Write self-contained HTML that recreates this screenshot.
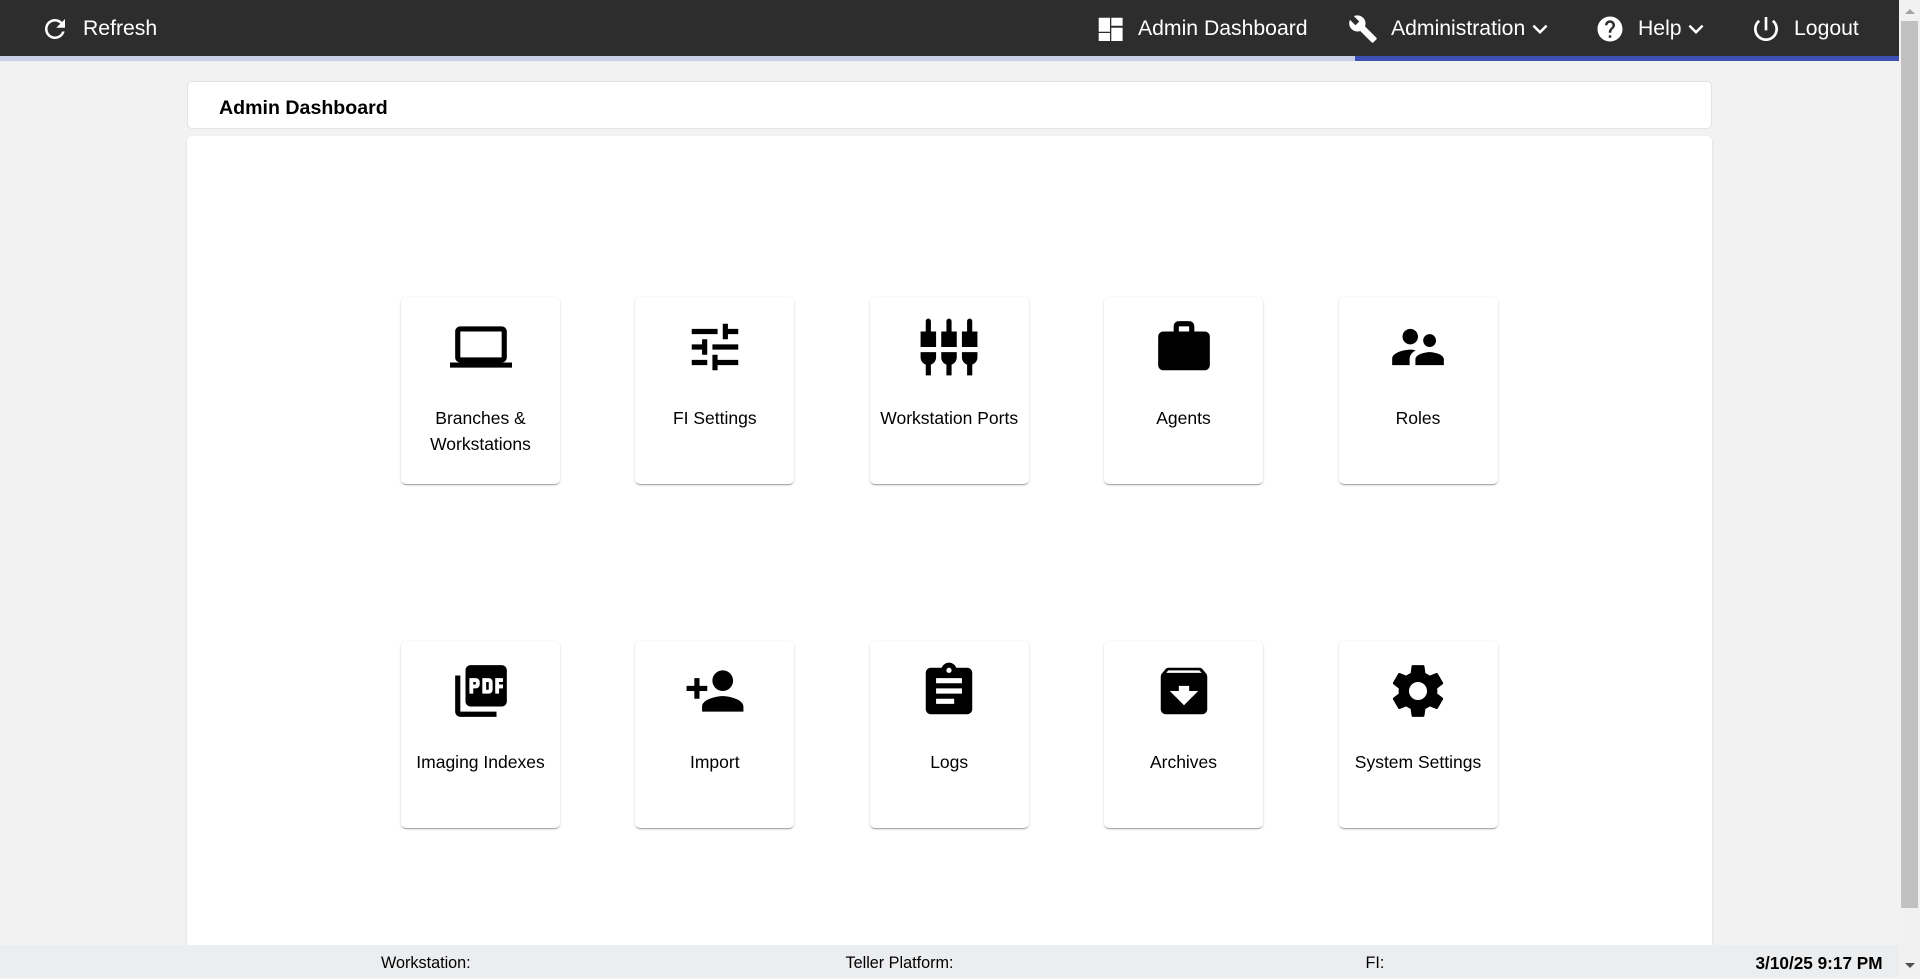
<!DOCTYPE html>
<html lang="en"><head><meta charset="utf-8"><title>Admin Dashboard</title>
<style>
*{box-sizing:border-box}
html,body{margin:0;padding:0;width:1920px;height:977px;overflow:hidden;background:#f2f2f3;font-family:"Liberation Sans",Arial,sans-serif;color:#000}
.abs,.nav,svg{position:absolute}
svg{display:block;fill:currentColor}
.top{position:absolute;left:0;top:0;width:1899px;height:56px;background:#2d2d2d}
.bar{position:absolute;left:0;top:56px;width:1354.5px;height:5px;background:#cbd0e9}
.bar2{position:absolute;left:1354.5px;top:56px;width:544.5px;height:5px;background:#3f51b5}
.nav{top:14.5px;font-size:21.2px;line-height:28px;color:#fff;white-space:nowrap}
.top svg{color:#fff}
.title{position:absolute;left:187px;top:81px;width:1525px;height:48px;background:#fff;border:1px solid #e3e3e3;border-radius:5px}
.title b{position:absolute;left:31px;top:11.5px;font-size:19.6px;line-height:28px;white-space:nowrap}
.main{position:absolute;left:187px;top:136px;width:1525px;height:830px;background:#fff;border-radius:5px;box-shadow:0 1px 2px rgba(0,0,0,.12)}
.card{position:absolute;width:159px;height:187px;background:#fff;border-radius:5px;box-shadow:0 2px 1px -1px rgba(0,0,0,.2),0 1px 1px 0 rgba(0,0,0,.14),0 1px 3px 0 rgba(0,0,0,.12)}
.card svg{left:48.5px;top:18.5px;width:62px;height:62px}
.card div{position:absolute;left:0;width:100%;top:108px;text-align:center;font-size:17.5px;line-height:26px}
.foot{position:absolute;left:0;top:945px;width:1899px;height:32px;background:#ecedef;font-size:16.2px;line-height:32px}
.foot span{position:absolute;top:1.5px;white-space:nowrap}
.foot b{position:absolute;left:1755.5px;top:2px;font-size:17.2px;white-space:nowrap}
.sb{position:absolute;left:1899px;top:0;width:21px;height:977px;background:#f1f1f1}
.th{position:absolute;left:2px;top:21px;width:17px;height:887px;background:#c1c1c1}
.up{position:absolute;left:6px;top:9px;width:0;height:0;border-left:5px solid transparent;border-right:5px solid transparent;border-bottom:5px solid #a3a3a3}
.dn{position:absolute;left:6px;top:963px;width:0;height:0;border-left:5px solid transparent;border-right:5px solid transparent;border-top:5px solid #505050}
</style></head><body>
<div class="top">
<svg style="left:40px;top:13.5px;width:30px;height:30px" viewBox="0 0 24 24"><path d="M17.65 6.35C16.2 4.9 14.21 4 12 4c-4.42 0-7.99 3.58-7.99 8s3.57 8 7.99 8c3.73 0 6.84-2.55 7.73-6h-2.08c-.82 2.33-3.04 4-5.65 4-3.31 0-6-2.69-6-6s2.69-6 6-6c1.66 0 3.14.69 4.22 1.78L13 11h7V4l-2.35 2.35z"/></svg>
<span class="nav" style="left:83px">Refresh</span>
<svg style="left:1098px;top:17px;width:26px;height:25px" viewBox="0 0 26 25"><path d="M.7.7h11.3v14H.7zM.7 16h11.3v8H.7zM13.3.7h11.3v8H13.3zM13.3 10.7h11.3v13.3H13.3z"/></svg>
<span class="nav" style="left:1138px">Admin Dashboard</span>
<svg style="left:1348px;top:14px;width:30px;height:30px" viewBox="0 0 24 24"><path d="M22.7 19l-9.1-9.1c.9-2.3.4-5-1.5-6.9-2-2-5-2.4-7.4-1.3L9 6 6 9 1.6 4.7C.4 7.1.9 10.1 2.9 12.1c1.9 1.9 4.6 2.4 6.9 1.5l9.1 9.1c.4.4 1 .4 1.4 0l2.3-2.3c.5-.4.5-1.1.1-1.4z"/></svg>
<span class="nav" style="left:1391px">Administration</span>
<svg style="left:1524.5px;top:13.5px;width:30px;height:30px" viewBox="0 0 24 24"><path d="M16.59 8.59L12 13.17 7.41 8.59 6 10l6 6 6-6z"/></svg>
<svg style="left:1595px;top:14px;width:30px;height:30px" viewBox="0 0 24 24"><path d="M12 2C6.48 2 2 6.48 2 12s4.48 10 10 10 10-4.48 10-10S17.52 2 12 2zm1 17h-2v-2h2v2zm2.07-7.75l-.9.92C13.45 12.9 13 13.5 13 15h-2v-.5c0-1.1.45-2.1 1.17-2.83l1.24-1.26c.37-.36.59-.86.59-1.41 0-1.1-.9-2-2-2s-2 .9-2 2H8c0-2.21 1.79-4 4-4s4 1.79 4 4c0 .88-.36 1.68-.93 2.25z"/></svg>
<span class="nav" style="left:1638px">Help</span>
<svg style="left:1681px;top:13.5px;width:30px;height:30px" viewBox="0 0 24 24"><path d="M16.59 8.59L12 13.17 7.41 8.59 6 10l6 6 6-6z"/></svg>
<svg style="left:1750px;top:13px;width:32px;height:32px" viewBox="0 0 24 24"><path d="M13 3h-2v10h2V3zm4.83 2.17l-1.42 1.42C17.99 7.86 19 9.81 19 12c0 3.87-3.13 7-7 7s-7-3.13-7-7c0-2.19 1.01-4.14 2.58-5.42L6.17 5.17C4.23 6.82 3 9.26 3 12c0 4.97 4.03 9 9 9s9-4.03 9-9c0-2.74-1.23-5.18-3.17-6.83z"/></svg>
<span class="nav" style="left:1794px">Logout</span>
</div>
<div class="bar"></div><div class="bar2"></div>
<div class="title"><b>Admin Dashboard</b></div>
<div class="main"></div>

<div class="card" style="left:401px;top:297px"><svg viewBox="0 0 24 24"><path d="M20 18c1.1 0 1.99-.9 1.99-2L22 6c0-1.1-.9-2-2-2H4c-1.1 0-2 .9-2 2v10c0 1.1.9 2 2 2H0v2h24v-2h-4zM4 6h16v10H4V6z"/></svg><div>Branches &amp;<br>Workstations</div></div>
<div class="card" style="left:635.3px;top:297px"><svg viewBox="0 0 24 24"><path d="M3 17v2h6v-2H3zM3 5v2h10V5H3zm10 16v-2h8v-2h-8v-2h-2v6h2zM7 9v2H3v2h4v2h2V9H7zm14 4v-2H11v2h10zm-6-4h2V7h4V5h-4V3h-2v6z"/></svg><div>FI Settings</div></div>
<div class="card" style="left:869.7px;top:297px"><svg viewBox="0 0 24 24"><path d="M5 2c0-.55-.45-1-1-1s-1 .45-1 1v4H1v6h6V6H5V2zm4 14c0 1.3.84 2.4 2 2.82V23h2v-4.18c1.16-.41 2-1.51 2-2.82v-2H9v2zm-8 0c0 1.3.84 2.4 2 2.82V23h2v-4.18C6.16 18.4 7 17.3 7 16v-2H1v2zM21 6V2c0-.55-.45-1-1-1s-1 .45-1 1v4h-2v6h6V6h-2zm-8-4c0-.55-.45-1-1-1s-1 .45-1 1v4H9v6h6V6h-2V2zm4 14c0 1.3.84 2.4 2 2.82V23h2v-4.18c1.16-.41 2-1.51 2-2.82v-2h-6v2z"/></svg><div>Workstation Ports</div></div>
<div class="card" style="left:1104px;top:297px"><svg viewBox="0 0 24 24"><path d="M20 6h-4V4c0-1.11-.89-2-2-2h-4c-1.11 0-2 .89-2 2v2H4c-1.11 0-1.99.89-1.99 2L2 19c0 1.11.89 2 2 2h16c1.11 0 2-.89 2-2V8c0-1.11-.89-2-2-2zm-6 0h-4V4h4v2z"/></svg><div>Agents</div></div>
<div class="card" style="left:1338.5px;top:297px"><svg viewBox="0 0 24 24"><path d="M16.5 12c1.38 0 2.49-1.12 2.49-2.5S17.88 7 16.5 7C15.12 7 14 8.12 14 9.5s1.12 2.5 2.5 2.5zM9 11c1.66 0 2.99-1.34 2.99-3S10.66 5 9 5C7.34 5 6 6.34 6 8s1.34 3 3 3zm7.5 3c-1.83 0-5.5.92-5.5 2.75V19h11v-2.25c0-1.83-3.67-2.75-5.5-2.75zM9 13c-2.33 0-7 1.17-7 3.5V19h6.75v-2.25c0-.85.33-2.34 2.37-3.47C10.25 13.1 9.51 13 9 13z"/></svg><div>Roles</div></div>

<div class="card" style="left:401px;top:641px"><svg viewBox="0 0 24 24"><path d="M20 2H8c-1.1 0-2 .9-2 2v12c0 1.1.9 2 2 2h12c1.1 0 2-.9 2-2V4c0-1.1-.9-2-2-2zm-8.5 7.5c0 .83-.67 1.5-1.5 1.5H9v2H7.5V7H10c.83 0 1.5.67 1.5 1.5v1zm5 2c0 .83-.67 1.5-1.5 1.5h-2.5V7H15c.83 0 1.5.67 1.5 1.5v3zm4-3H19v1h1.5V11H19v2h-1.5V7h3v1.5zM9 9.5h1v-1H9v1zM4 6H2v14c0 1.1.9 2 2 2h14v-2H4V6zm10 5.5h1v-3h-1v3z"/></svg><div>Imaging Indexes</div></div>
<div class="card" style="left:635.3px;top:641px"><svg viewBox="0 0 24 24"><path d="M15 12c2.21 0 4-1.79 4-4s-1.79-4-4-4-4 1.79-4 4 1.79 4 4 4zm-9-2V7H4v3H1v2h3v3h2v-3h3v-2H6zm9 4c-2.67 0-8 1.34-8 4v2h16v-2c0-2.66-5.33-4-8-4z"/></svg><div>Import</div></div>
<div class="card" style="left:869.7px;top:641px"><svg viewBox="0 0 24 24"><path d="M19 3h-4.18C14.4 1.84 13.3 1 12 1c-1.3 0-2.4.84-2.82 2H5c-1.1 0-2 .9-2 2v14c0 1.1.9 2 2 2h14c1.1 0 2-.9 2-2V5c0-1.1-.9-2-2-2zm-7 0c.55 0 1 .45 1 1s-.45 1-1 1-1-.45-1-1 .45-1 1-1zm2 14H7v-2h7v2zm3-4H7v-2h10v2zm0-4H7V7h10v2z"/></svg><div>Logs</div></div>
<div class="card" style="left:1104px;top:641px"><svg viewBox="0 0 24 24"><path d="M20.54 5.23l-1.39-1.68C18.88 3.21 18.47 3 18 3H6c-.47 0-.88.21-1.16.55L3.46 5.23C3.17 5.57 3 6.02 3 6.5V19c0 1.1.9 2 2 2h14c1.1 0 2-.9 2-2V6.5c0-.48-.17-.93-.46-1.27zM12 17.5L6.5 12H10v-2h4v2h3.5L12 17.5zM5.12 5l.81-1h12l.94 1H5.12z"/></svg><div>Archives</div></div>
<div class="card" style="left:1338.5px;top:641px"><svg viewBox="0 0 24 24"><path d="M19.43 12.98c.04-.32.07-.64.07-.98s-.03-.66-.07-.98l2.11-1.65c.19-.15.24-.42.12-.64l-2-3.46c-.12-.22-.39-.3-.61-.22l-2.49 1c-.52-.4-1.08-.73-1.69-.98l-.38-2.65C14.46 2.18 14.25 2 14 2h-4c-.25 0-.46.18-.49.42l-.38 2.65c-.61.25-1.17.59-1.69.98l-2.49-1c-.23-.09-.49 0-.61.22l-2 3.46c-.13.22-.07.49.12.64l2.11 1.65c-.04.32-.07.65-.07.98s.03.66.07.98l-2.11 1.65c-.19.15-.24.42-.12.64l2 3.46c.12.22.39.3.61.22l2.49-1c.52.4 1.08.73 1.69.98l.38 2.65c.03.24.24.42.49.42h4c.25 0 .46-.18.49-.42l.38-2.65c.61-.25 1.17-.59 1.69-.98l2.49 1c.23.09.49 0 .61-.22l2-3.46c.12-.22.07-.49-.12-.64l-2.11-1.65zM12 15.5c-1.93 0-3.5-1.57-3.5-3.5s1.57-3.5 3.5-3.5 3.5 1.57 3.5 3.5-1.57 3.5-3.5 3.5z"/></svg><div>System Settings</div></div>

<div class="foot"><span style="left:381px">Workstation:</span><span style="left:845.5px">Teller Platform:</span><span style="left:1365.5px">FI:</span><b>3/10/25 9:17 PM</b></div>
<div class="sb"><div class="up"></div><div class="th"></div><div class="dn"></div></div>
</body></html>
